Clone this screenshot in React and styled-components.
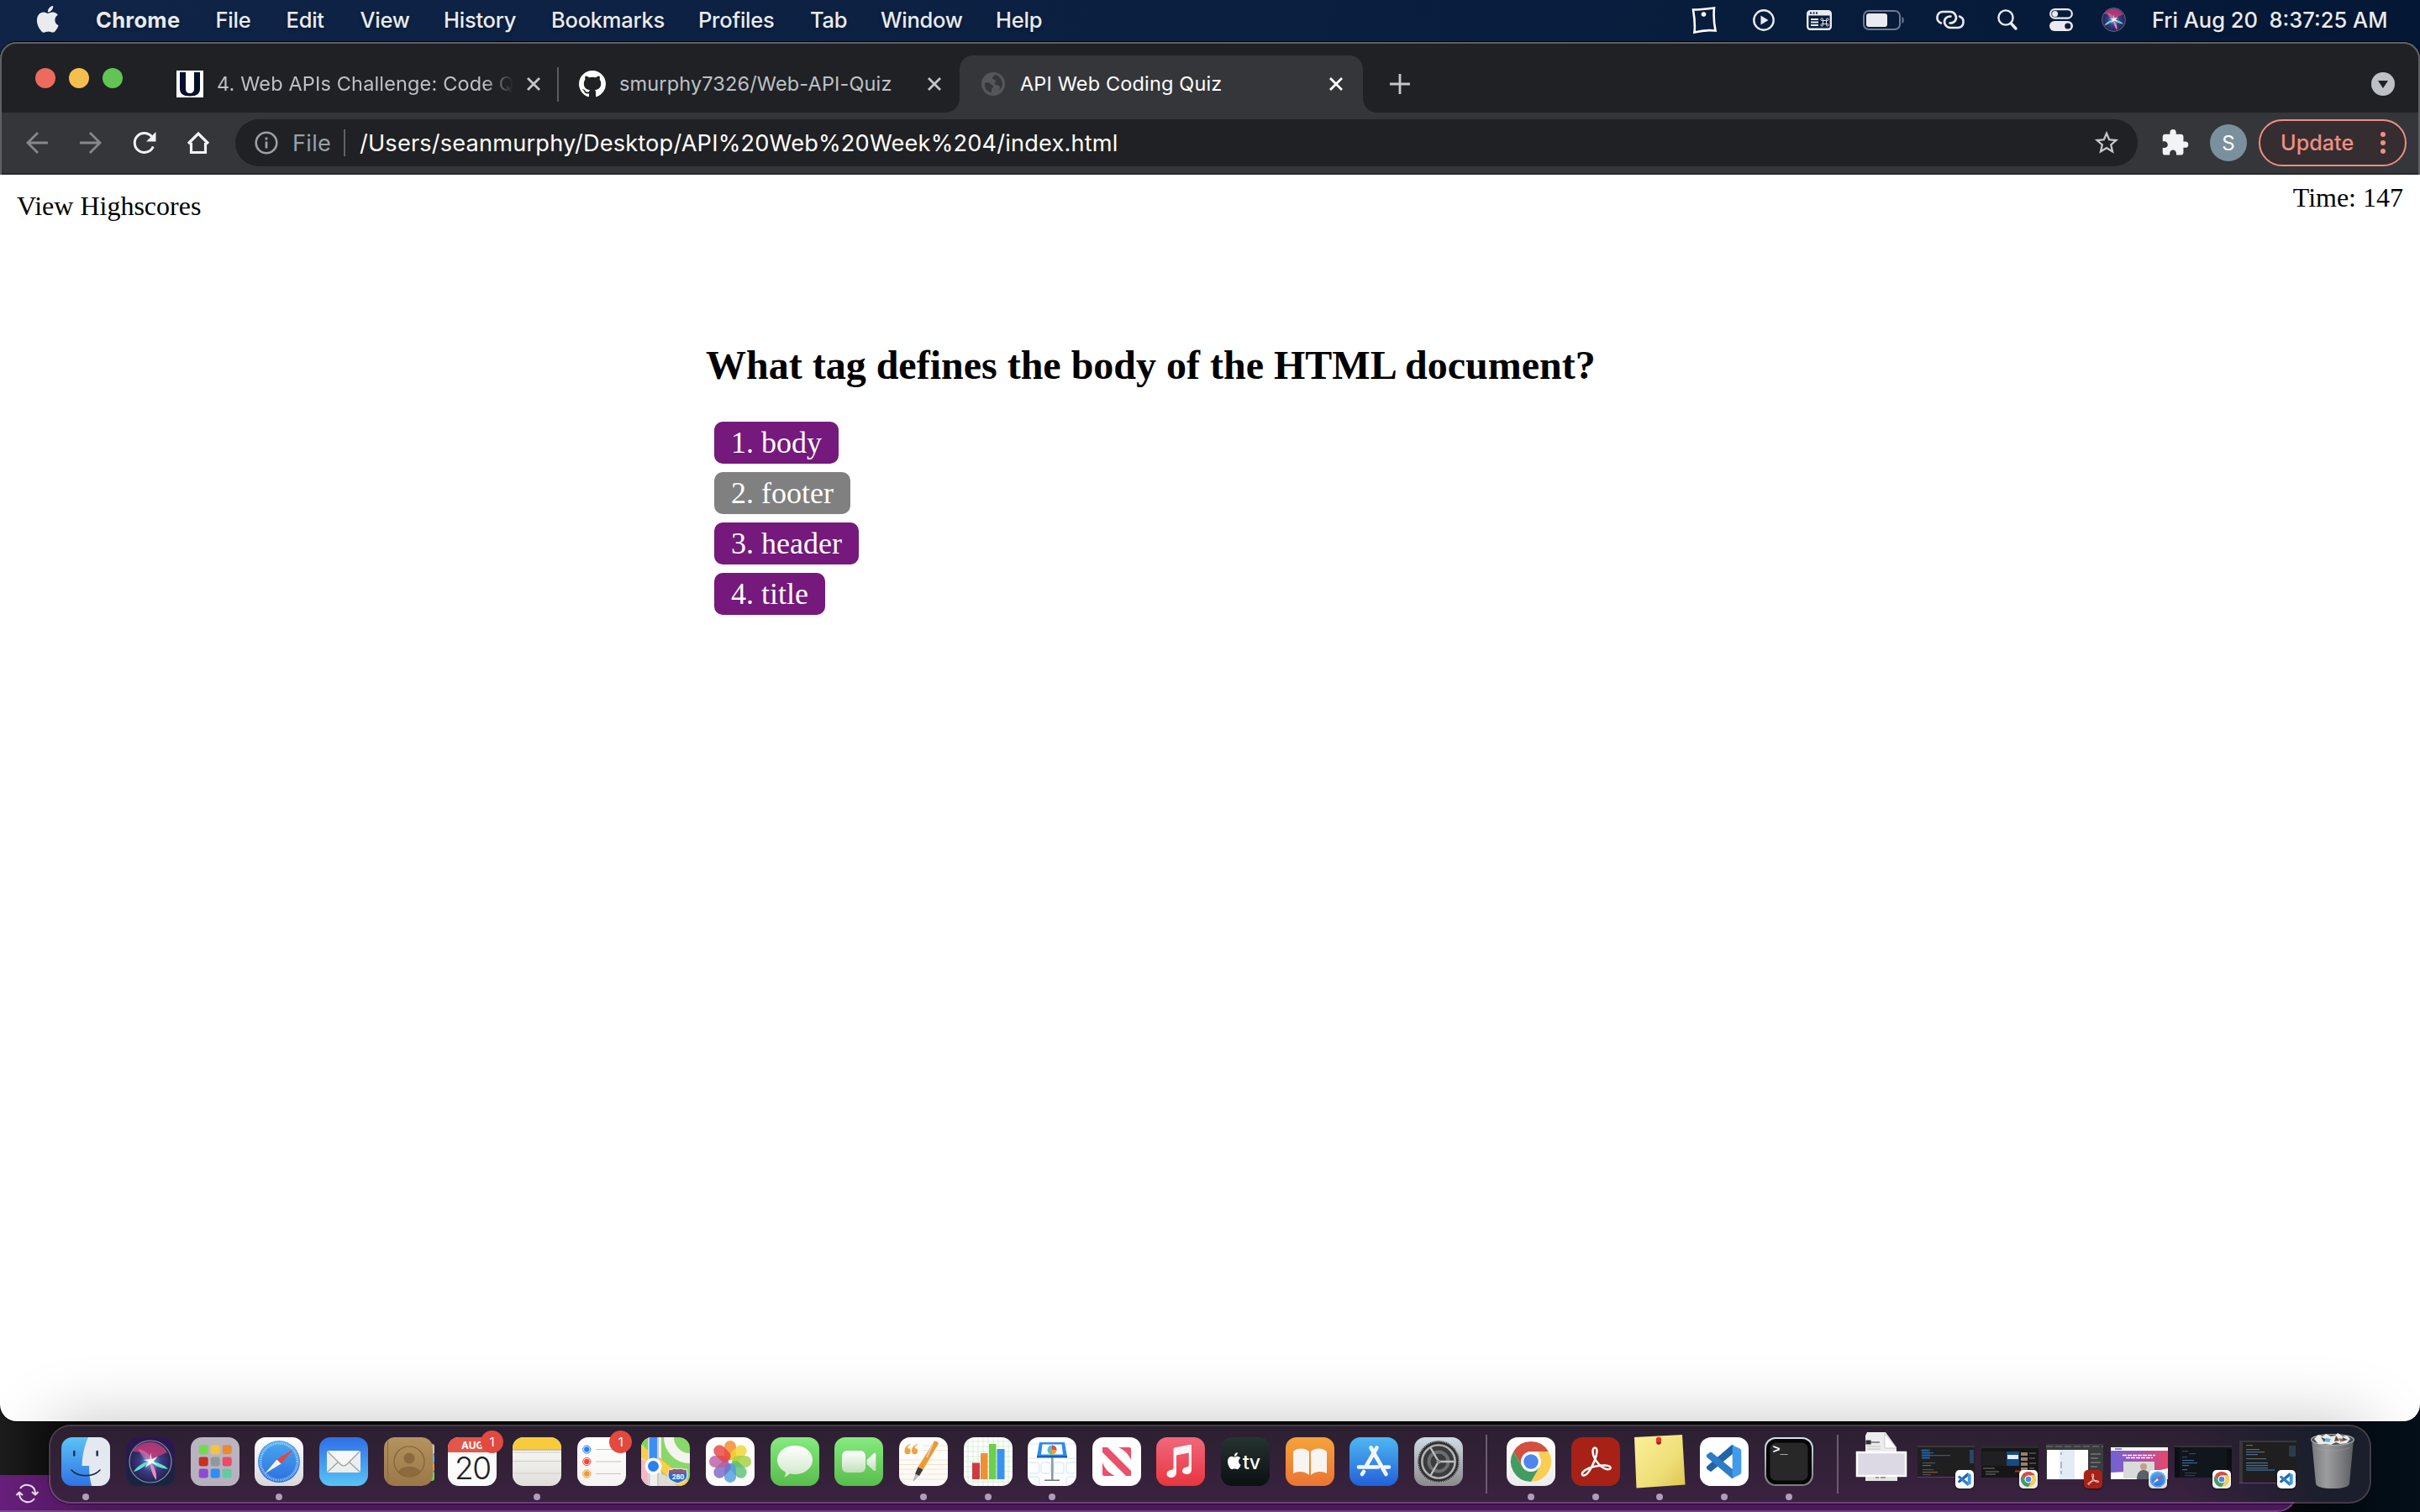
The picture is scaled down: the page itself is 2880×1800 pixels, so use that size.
import React from 'react';
import styled, { createGlobalStyle, css } from 'styled-components';

const GlobalStyle = createGlobalStyle`
  html, body { margin: 0; padding: 0; background: #000; }
  *, *::before, *::after { box-sizing: border-box; }
  svg { display: block; overflow: visible; flex: none; }
`;

const Desktop = styled.div`
  position: relative;
  isolation: isolate;
  width: 2880px;
  height: 1800px;
  overflow: hidden;
  display: flex;
  flex-direction: column;
  font-family: Inter, 'Liberation Sans', sans-serif;
  background: linear-gradient(90deg, #0f2446 0, #0b1f41 50%, #041836 100%);
`;

/* ---------- menu bar ---------- */

const MenuBar = styled.header`
  height: 50px;
  padding: 0 37px 3px 43px;
  display: flex;
  align-items: center;
  color: #e9ebef;
  font-size: 25.5px;
  font-weight: 500;
  text-shadow: 0 2px 4px rgba(0, 0, 0, 0.3);
`;

const AppleSlot = styled.div`
  width: 71px;
  height: 34px;
`;

const MenuItem = styled.span`
  width: ${(p) => p.$w}px;
  white-space: nowrap;
  font-weight: ${(p) => (p.$bold ? 700 : 500)};
  letter-spacing: ${(p) => (p.$bold ? 0.3 : -0.25)}px;
`;

const StatusIcons = styled.div`
  flex: 1;
  display: flex;
  justify-content: flex-end;
  align-items: center;
`;

const StatusSlot = styled.div`
  margin-left: ${(p) => p.$gap}px;
`;

const Clock = styled.span`
  width: 282px;
  margin-left: 31px;
  white-space: pre;
`;

/* ---------- browser window ---------- */

const Window = styled.main`
  height: 1642px;
  display: flex;
  flex-direction: column;
  border-radius: 20px;
  background: #fff;
  box-shadow: 0 0 0 1px #000;
`;

const Chrome = styled.div`
  position: relative;
  height: 158px;
  border-radius: 20px 20px 0 0;
  overflow: hidden;
  background: #202124;
  &::after {
    content: '';
    position: absolute;
    inset: 0 0 -20px 0;
    border: 2px solid #5f6063;
    border-radius: 20px;
    pointer-events: none;
  }
`;

const TabStrip = styled.div`
  height: 84px;
  padding-left: 42px;
  display: flex;
  align-items: flex-end;
`;

const Lights = styled.div`
  width: 144px;
  height: 84px;
  padding-top: 31px;
  display: flex;
  gap: 16px;
`;

const Light = styled.i`
  width: 24px;
  height: 24px;
  border-radius: 50%;
  background: ${(p) => p.$c};
`;

const Tab = styled.div`
  position: relative;
  width: ${(p) => p.$w}px;
  height: 68px;
  padding: 0 21px 0 24px;
  display: flex;
  align-items: center;
  color: #bdc1c6;
  font-size: 23.5px;
  ${(p) =>
    p.$active &&
    css`
      padding-right: 23px;
      color: #fff;
      background: #35363a;
      border-radius: 16px 16px 0 0;
      &::before,
      &::after {
        content: '';
        position: absolute;
        bottom: 0;
        width: 16px;
        height: 16px;
      }
      &::before {
        left: -16px;
        background: radial-gradient(circle at 0 0, transparent 15.5px, #35363a 16px);
      }
      &::after {
        right: -16px;
        background: radial-gradient(circle at 100% 0, transparent 15.5px, #35363a 16px);
      }
    `}
  ${(p) =>
    p.$divided &&
    css`
      background: linear-gradient(#5a5c60, #5a5c60) right 14px / 2px 41px no-repeat;
    `}
`;

const TabIcon = styled.span`
  width: 32px;
  height: 32px;
  margin-right: 16px;
  display: flex;
  align-items: center;
  justify-content: center;
`;

const UFavicon = styled.span`
  width: 32px;
  height: 32px;
  background: #fff;
`;

const TabTitle = styled.span`
  flex: 1;
  padding-bottom: 2px;
  overflow: hidden;
  white-space: nowrap;
  letter-spacing: 0.15px;
  ${(p) =>
    p.$fade &&
    css`
      margin-right: 15px;
      mask-image: linear-gradient(90deg, #000 90%, transparent 100%);
    `}
`;

const NewTab = styled.div`
  width: 88px;
  height: 68px;
  display: flex;
  align-items: center;
  justify-content: center;
`;

const TabSearch = styled.div`
  flex: 1;
  height: 68px;
  padding-right: 30px;
  display: flex;
  align-items: center;
  justify-content: flex-end;
`;

const Toolbar = styled.div`
  height: 74px;
  padding: 8px 16px 8px 28px;
  display: flex;
  align-items: center;
  background: #35363a;
  border-bottom: 2px solid #27282b;
`;

const NavButton = styled.div`
  width: 64px;
  height: 32px;
`;

const AddressBar = styled.div`
  width: 2264px;
  height: 56px;
  margin-left: -4px;
  padding: 0 20px;
  display: flex;
  align-items: center;
  border-radius: 28px;
  background: #202124;
  color: #fff;
  font-size: 27.2px;
`;

const Scheme = styled.span`
  width: 61px;
  margin-left: 14px;
  color: #9aa0a6;
  letter-spacing: 0.3px;
`;

const Rule = styled.i`
  width: 2px;
  height: 32px;
  margin-right: 17px;
  background: #5f6368;
`;

const Url = styled.span`
  flex: 1;
  white-space: nowrap;
  letter-spacing: 0.17px;
`;

const Avatar = styled.div`
  width: 44px;
  height: 44px;
  margin: 0 14px 0 26px;
  border-radius: 50%;
  background: #7b909d;
  color: #fff;
  font-size: 24px;
  display: flex;
  align-items: center;
  justify-content: center;
`;

const ExtensionSlot = styled.div`
  margin-left: 29px;
  width: 31px;
`;

const UpdateButton = styled.div`
  width: 176px;
  height: 56px;
  padding: 0 23px 0 24px;
  display: flex;
  align-items: center;
  justify-content: space-between;
  border: 2px solid #ee8f85;
  border-radius: 28px;
  background: #352d30;
  color: #ee8f85;
  font-size: 25.2px;
  font-weight: 500;
`;

/* ---------- page ---------- */

const Page = styled.section`
  flex: 1;
  font-family: 'Liberation Serif', 'Times New Roman', serif;
  color: #000;
  font-size: 32px;
`;

const PageTop = styled.div`
  height: 173px;
  display: flex;
  justify-content: space-between;
  align-items: flex-start;
`;

const Highscores = styled.a`
  margin: 19px 0 0 20px;
  line-height: 36px;
`;

const Timer = styled.span`
  margin: 9px 20px 0 0;
  line-height: 36px;
`;

const Quiz = styled.div`
  margin-left: 840px;
`;

const Question = styled.h2`
  margin: 0 0 41px;
  height: 80px;
  line-height: 107px;
  font-size: 48px;
  font-weight: 700;
`;

const Choices = styled.div`
  padding-left: 10px;
  display: flex;
  flex-direction: column;
  align-items: flex-start;
  gap: 10px;
`;

const Choice = styled.button`
  height: 50px;
  padding: 0 20px;
  border: 0;
  border-radius: 10px;
  background: ${(p) => (p.$hover ? '#808080' : '#75197c')};
  color: #fff;
  font: 36px/48px 'Liberation Serif', 'Times New Roman', serif;
`;

/* ---------- dock ---------- */

const Backdrop = styled.div`
  z-index: -1;
  height: 128px;
  margin-top: -20px;
  padding-top: 20px;
  display: flex;
  flex-direction: column;
  justify-content: flex-end;
  background: linear-gradient(90deg, #1d1d1d 0, #141414 40px, #0b0b0b 90px, #0a0a0a 2700px, #03090f 2760px, #05101b 100%);
`;

const EditorStatus = styled.div`
  width: 2733px;
  height: 44px;
  padding: 7px 0 0 19px;
  border-bottom: 2px solid #7b4a88;
  border-right: 2px solid #7b4a88;
  border-radius: 0 0 22px 0;
  background: linear-gradient(90deg, #68207c 0, #571a67 120px, #571a67 100%);
`;

const Stage = styled.div`
  position: relative;
  z-index: 0;
`;

const Dock = styled.nav`
  position: absolute;
  left: 58px;
  bottom: 10px;
  width: 2764px;
  height: 94px;
  padding: 0 4px;
  display: flex;
  border: 2px solid rgba(125, 110, 130, 0.5);
  border-radius: 26px;
  background: linear-gradient(90deg, transparent 92%, rgba(20, 30, 40, 0.8) 98%),
    linear-gradient(#2c2030, #3a2240);
  background-clip: padding-box;
  box-shadow: 0 0 0 1px rgba(0, 0, 0, 0.5), 0 0 80px rgba(0, 0, 0, 0.25);
`;

const Slot = styled.div`
  position: relative;
  width: 76.67px;
  height: 90px;
  padding-top: 13px;
  flex: none;
  display: flex;
  flex-direction: column;
  align-items: center;
`;

const RunningDot = styled.i`
  width: 8px;
  height: 8px;
  margin-top: 9px;
  border-radius: 50%;
  background: #b39bbd;
`;

const Divider = styled.i`
  width: 2px;
  height: 70px;
  flex: none;
  margin: 10px ${(p) => p.$right}px 0 ${(p) => p.$left}px;
  background: #6d5a73;
`;

const Badge = styled.span`
  position: absolute;
  top: 5px;
  left: 48px;
  width: 27px;
  height: 27px;
  border-radius: 50%;
  background: #e2493f;
  color: #fff;
  font-size: 15px;
  line-height: 27px;
  text-align: center;
`;

const Thumb = styled.div`
  position: relative;
  width: 68px;
  height: 58px;
  display: flex;
  align-items: center;
`;

const MiniIcon = styled.div`
  position: absolute;
  right: 1px;
  top: 39px;
  filter: drop-shadow(0 1px 1px rgba(0, 0, 0, 0.5));
`;

/* ---------- icons ---------- */

const Grad = ({ id, a, b }) => (
  <linearGradient id={id} x1="0" y1="0" x2="0" y2="1">
    <stop offset="0" stopColor={a} />
    <stop offset="1" stopColor={b} />
  </linearGradient>
);

const Tile = ({ id, a, b, size = 58, children }) => (
  <svg width={size} height={size} viewBox="0 0 58 58">
    <defs>
      <Grad id={`g-${id}`} a={a} b={b} />
      <clipPath id={`c-${id}`}>
        <rect width="58" height="58" rx="13" />
      </clipPath>
    </defs>
    <g clipPath={`url(#c-${id})`}>
      <rect width="58" height="58" fill={`url(#g-${id})`} />
      {children}
    </g>
  </svg>
);

const APPLE =
  'M17.05 20.28c-.98.95-2.05.8-3.08.35-1.09-.46-2.09-.48-3.24 0-1.44.62-2.2.44-3.06-.35C2.79 15.25 3.51 7.59 9.05 7.31c1.35.07 2.29.74 3.08.8 1.18-.24 2.31-.93 3.57-.84 1.51.12 2.65.72 3.4 1.8-3.12 1.87-2.38 5.98.48 7.13-.57 1.5-1.31 2.99-2.54 4.09zM12.03 7.25c-.15-2.23 1.66-4.07 3.74-4.25.29 2.58-2.34 4.5-3.74 4.25z';

const Finder = () => (
  <Tile id="finder" a="#5bc3f5" b="#2f72e4">
    <path d="M32 0C27 11 25 22 24.5 34H33c0 8 1 17 3 24h22V0z" fill="#e4e9f1" />
    <path d="M15.3 17v4.5M42.700 17v4.5" stroke="#173a5e" strokeWidth="2.600" strokeLinecap="round" />
    <path d="M12 39c8 9 26 9 34 0" fill="none" stroke="#16283c" strokeWidth="1.600" strokeLinecap="round" />
  </Tile>
);

const SiriOrb = () => (
  <>
    <circle cx="29" cy="29" r="25" fill="url(#siri-orb)" />
    <path d="M8 17C18 2 40 2 49 18c-8 4-14 5-20 10C24 20 18 17 8 17z" fill="#c33a78" opacity=".85" />
    <path d="M15 14c8 2 14 6 16 15-8-1-14-7-16-15z" fill="#e786c5" opacity=".5" />
    <path d="M29 28c9 2 17 5 21 10-8-1-16-3-21-10zM29 28C22 35 15 40 9 41c4-6 11-11 20-13z" fill="#5fe3d0" />
    <path d="M28 28c5 6 9 13 8 23-5-6-7-14-8-23z" fill="#f087c2" />
    <path d="M29 18l1.600 8 7-3-5 6 5 4-7-2-8 5 4-7-6-2 8-1z" fill="#fff" opacity=".9" />
    <circle cx="29" cy="29" r="25" fill="none" stroke="#8fb8c4" strokeWidth="1.200" opacity=".8" />
  </>
);

const SiriDefs = () => (
  <defs>
    <radialGradient id="siri-orb">
      <stop offset="0" stopColor="#6fb9d8" />
      <stop offset=".5" stopColor="#3a3c83" />
      <stop offset="1" stopColor="#27204f" />
    </radialGradient>
  </defs>
);

const Siri = () => (
  <Tile id="siri" a="#2e1650" b="#18263f">
    <SiriDefs />
    <SiriOrb />
  </Tile>
);

const PAD = ['#6fdc4e', '#f5c43c', '#e88a34', '#c92f22', '#8f9a9c', '#ec4b66', '#8d4bd4', '#2f8ef5', '#5fcca0'];
const Launchpad = () => (
  <Tile id="launch" a="#bab6c1" b="#b7b0bd">
    {PAD.map((c, i) => (
      <rect key={c} x={9.700 + (i % 3) * 14} y={9.200 + Math.floor(i / 3) * 14.200} width="11" height="11" rx="2.400" fill={c} />
    ))}
  </Tile>
);

const Safari = ({ size }) => (
  <Tile id="safari" a="#ffffff" b="#d9d9dc" size={size}>
    <defs>
      <Grad id="saf-b" a="#49a9f0" b="#2c6fdf" />
    </defs>
    <circle cx="29" cy="29" r="25" fill="url(#saf-b)" />
    <circle cx="29" cy="29" r="22" fill="none" stroke="#cfe6fb" strokeWidth="3" strokeDasharray=".7 1.220" />
    <path d="M46.500 14L31.500 31.500 26.500 26.500z" fill="#e8453a" />
    <path d="M12 43.500L26.500 26.500 31.500 31.500z" fill="#f4f4f4" />
  </Tile>
);

const Mail = () => (
  <Tile id="mail" a="#2f6ee8" b="#58c4f6">
    <rect x="9" y="16" width="40" height="26" rx="2" fill="#eceded" />
    <path d="M10 41l13-12M48 41L35 29" stroke="#9a9c9f" strokeWidth="1.100" />
    <path d="M10 17l15 15c2.500 2.500 5.500 2.500 8 0l15-15" fill="#f7f7f7" stroke="#9a9c9f" strokeWidth="1.100" />
  </Tile>
);

const Contacts = () => (
  <svg width="58" height="58" viewBox="0 0 58 58">
    <defs>
      <Grad id="cont" a="#b3935f" b="#9b7748" />
    </defs>
    <rect x="50" y="8" width="10" height="13" rx="3" fill="#c9c4bb" />
    <rect x="50" y="20" width="10" height="11" rx="2" fill="#58b7ea" />
    <rect x="50" y="30" width="10" height="11" rx="2" fill="#ee9337" />
    <rect x="50" y="40" width="10" height="12" rx="3" fill="#6cd557" />
    <rect width="58" height="58" rx="13" fill="url(#cont)" />
    <path d="M4.500 4v50" stroke="#8a6a3e" strokeWidth="1" />
    <circle cx="30" cy="29" r="18" fill="none" stroke="#826339" strokeWidth="1.200" />
    <circle cx="30" cy="25" r="6.500" fill="#8a6a3e" />
    <path d="M17 41c3-8 23-8 26 0-7 8-19 8-26 0z" fill="#8a6a3e" />
  </svg>
);

const CalTile = styled.div`
  width: 58px;
  height: 58px;
  border-radius: 13px;
  overflow: hidden;
  display: flex;
  flex-direction: column;
  align-items: center;
  background: #fbfbfb;
  color: #222;
  font-size: 37px;
  line-height: 37px;
  letter-spacing: -1.5px;
  font-weight: 300;
`;

const CalMonth = styled.span`
  width: 58px;
  height: 18px;
  background: #e2564b;
  color: #fff;
  font-size: 12px;
  font-weight: 700;
  line-height: 19px;
  letter-spacing: 0;
  text-align: center;
`;

const Calendar = () => (
  <CalTile>
    <CalMonth>AUG</CalMonth>
    20
  </CalTile>
);

const Notes = () => (
  <Tile id="notes" a="#fdfdfd" b="#e0ded8">
    <rect width="58" height="14.500" fill="#f8cb3d" />
    <path d="M0 15h58" stroke="#9a9484" strokeWidth="1" />
    <path d="M1 18h57" stroke="#b8b5ae" strokeWidth="1.400" strokeDasharray=".8 1.100" />
    <path d="M0 28.500h58M0 43h58" stroke="#cfcdca" strokeWidth="1" />
  </Tile>
);

const Reminders = () => (
  <Tile id="rem" a="#ffffff" b="#f6f4f2">
    {['#2b7df0', '#ea4a3e', '#ee9631'].map((c, i) => (
      <g key={c}>
        <circle cx="11.300" cy={14.500 + i * 14.500} r="4.600" fill="none" stroke={c} strokeWidth="1" />
        <circle cx="11.300" cy={14.500 + i * 14.500} r="3.200" fill={c} />
        <path d={`M22 ${14.500 + i * 14.500}h30`} stroke="#c4c4c6" strokeWidth="1" />
      </g>
    ))}
  </Tile>
);

const Shield = styled.text`
  font: 700 7.500px Inter, sans-serif;
  fill: #fff;
`;

const Maps = () => (
  <Tile id="maps" a="#8ad86a" b="#8ad86a">
    <path d="M0 0h24v58H0z" fill="#f0efec" />
    <path d="M0 25l8 6v27H0z" fill="#f3b7c6" />
    <path d="M0 8l8 8v14L0 24z" fill="#f8cf4a" />
    <path d="M0 0h8v16L0 8z" fill="#7ed45c" />
    <path d="M21 42l37 16H21z" fill="#dedcd5" />
    <path d="M21 24l37 29v10H50L21 38z" fill="#f8cf4a" stroke="#e0b02e" strokeWidth=".6" />
    <circle cx="58" cy="0" r="25" fill="none" stroke="#f5f4f0" strokeWidth="12" />
    <path d="M8.500 0h2v58h-2zM19 0h2v58h-2z" fill="#c9c8c5" />
    <path d="M10 0h9v34h-9z" fill="#3b8ff2" />
    <circle cx="14.500" cy="34.500" r="10" fill="#fff" />
    <circle cx="14.500" cy="34.500" r="6.500" fill="#2d7ff0" />
    <path d="M33 38c3 1 5 0 6-1 2 1 6 1 9 0 1 1 3 2 6 1 0 3 1 5 1 7 0 6-6 8-11.500 10C38 53 32 51 32 45c0-2 1-4 1-7z" fill="#2c6fcf" stroke="#fff" strokeWidth="1" />
    <path d="M33.500 39.500h20v2.500h-20z" fill="#dc4238" />
    <Shield x="36.700" y="49.500">280</Shield>
  </Tile>
);

const PETALS = ['#f08a28', '#f0d52f', '#a6cf3f', '#5cbf78', '#4f9de0', '#7a68c4', '#bb5f9f', '#e8463d'];
const Photos = () => (
  <Tile id="photos" a="#ffffff" b="#fafafa">
    {PETALS.map((c, i) => (
      <rect
        key={c}
        x="22"
        y="4"
        width="14"
        height="23"
        rx="7"
        fill={c}
        opacity=".82"
        transform={`rotate(${i * 45} 29 29)`}
      />
    ))}
  </Tile>
);

const Messages = () => (
  <Tile id="msg" a="#86ea80" b="#57bd4b">
    <defs>
      <Grad id="bub" a="#ffffff" b="#cfe6cb" />
    </defs>
    <path d="M29 10c12 0 21 7.500 21 17s-9 17-21 17c-2 0-4-.2-6-.7-2 2-4 3.500-7 4.200 1.500-1.800 2-3.800 1.800-6C12 38.500 8 33 8 27c0-9.500 9-17 21-17z" fill="url(#bub)" />
  </Tile>
);

const FaceTime = () => (
  <Tile id="ft" a="#86ea80" b="#57bd4b">
    <defs>
      <Grad id="cam" a="#ffffff" b="#c2dfbd" />
    </defs>
    <rect x="9" y="16" width="28" height="26" rx="6" fill="url(#cam)" />
    <path d="M38.500 27l8-7.500c1.500-1.300 2.800-.7 2.800 1v18c0 1.700-1.300 2.300-2.800 1l-8-7.500z" fill="url(#cam)" />
  </Tile>
);

const Pages = () => (
  <Tile id="pages" a="#ffffff" b="#fbfaf8">
    <path d="M28 10h30M28 15.500h30M0 27h58M0 32.500h58M0 38h58M0 44h58M0 50h58" stroke="#f6e2c4" strokeWidth="1" />
    <path d="M13 8c-4 1.500-6.500 4.500-6.500 8.500A3.600 3.600 0 1 0 10 13c0-1.800 1.200-3 3.400-4zM21.500 8c-4 1.500-6.500 4.500-6.500 8.500a3.600 3.600 0 1 0 3.500-3.500c0-1.800 1.200-3 3.400-4z" fill="#f0a23c" />
    <path d="M42 4.500c2-.5 4.500 1 5 3L28.500 38.500l-6-3z" fill="#ee9a2f" />
    <path d="M40 8l-7 16" stroke="#cfd2d6" strokeWidth="1.800" />
    <path d="M22.500 35.500l6 3-4.500 7.500-5-2.500z" fill="#3b3b3d" />
    <path d="M19.500 44.500l3.500 1.700L17 52z" fill="#bfc3c8" stroke="#777" strokeWidth=".4" />
  </Tile>
);

const Numbers = () => (
  <Tile id="nums" a="#ffffff" b="#fbfdfb">
    <path
      d="M5 0v58M11 0v58M17 0v58M23 0v58M29 0v58M35 0v58M41 0v58M47 0v58M53 0v58M0 5h58M0 11h58M0 17h58M0 23h58M0 29h58M0 35h58M0 41h58M0 47h58M0 53h58"
      stroke="#cdeccb"
      strokeWidth=".8"
    />
    <rect x="10" y="30.500" width="9" height="19.500" fill="#cf3a40" />
    <rect x="20" y="19" width="8.500" height="31" fill="#ee9133" />
    <rect x="30" y="8" width="8.500" height="42" fill="#6bd04a" />
    <rect x="39.500" y="14" width="9" height="36" fill="#3a93f2" />
  </Tile>
);

const Keynote = () => (
  <Tile id="key" a="#ffffff" b="#fafcff">
    <g fill="none" stroke="#cfe2f7" strokeWidth=".9">
      <rect x="-6" y="8" width="20" height="17" rx="3" />
      <rect x="44" y="8" width="20" height="17" rx="3" />
      <rect x="-6" y="30" width="20" height="13" rx="3" />
      <rect x="16" y="30" width="11" height="13" rx="3" />
      <rect x="31" y="30" width="12" height="13" rx="3" />
      <rect x="46" y="30" width="18" height="13" rx="3" />
      <rect x="-6" y="47" width="20" height="17" rx="3" />
      <rect x="46" y="47" width="18" height="17" rx="3" />
    </g>
    <path d="M28 23h2.600v28H28z" fill="#8e98a5" />
    <path d="M20 50.500h18v1.500H20z" fill="#6e7680" />
    <path d="M14 6h30l3 17H11z" fill="#2f8bea" />
    <path d="M11 22h36v2.500H11z" fill="#1b5fb8" />
    <path d="M17.500 8.500h23l1.500 12H16z" fill="#fff" />
    <circle cx="29" cy="15" r="5.500" fill="#56b9e8" />
    <path d="M29 15V9.500a5.500 5.500 0 0 1 5.500 5.500z" fill="#e24b4b" />
    <path d="M29 15h5.500a5.500 5.500 0 0 1-5.500 5.500z" fill="#f2a23a" />
    <path d="M29 15v5.500a5.500 5.500 0 0 1-5.300-4z" fill="#72c957" />
  </Tile>
);

const News = () => (
  <Tile id="news" a="#ffffff" b="#ffffff">
    <path d="M12 12h6l28 28v6h-6L12 18z" fill="#e9506b" />
    <path d="M31 12h13c1.300 0 2 .7 2 2v13C43 20 38 15 31 12zM12 30v14c0 1.300.7 2 2 2h13C20 43 15 38 12 30z" fill="#e9506b" />
  </Tile>
);

const Music = () => (
  <Tile id="music" a="#f0687c" b="#e8353f">
    <path
      d="M42 9.500v29.500c0 3-2.500 5-5.500 5S31 42.500 31 40.300c0-2.800 2.500-4.500 5-4.800 2-.3 2.800-.8 2.800-2.500V18.500L24 21.500V42c0 3.500-2.500 6-6 6-3.200 0-5.500-1.800-5.500-4.300 0-2.600 2.300-4.200 4.800-4.600 2.400-.4 3.200-1 3.200-3V15c0-1.600.6-2.400 2.200-2.700l17.300-3.500c1.300-.3 2 .1 2 .7z"
      fill="#fdf5f5"
    />
  </Tile>
);

const TvText = styled.text`
  font: 500 23px Inter, sans-serif;
  letter-spacing: -0.5px;
  fill: #fff;
`;

const AppleTv = () => (
  <Tile id="tv" a="#26332f" b="#0b1012">
    <path d={APPLE} transform="translate(3.500 14.500) scale(1.030 1.130)" fill="#fff" />
    <TvText x="26" y="37.500">tv</TvText>
  </Tile>
);

const Books = () => (
  <Tile id="books" a="#f4a33a" b="#ea7434">
    <path d="M28 17c-4-4.500-14-5-19 0v26c5-3 14-3 19 2zM30 17c4-4.500 14-5 19 0v26c-5-3-14-3-19 2z" fill="#f7f4f2" />
  </Tile>
);

const AppStore = () => (
  <Tile id="store" a="#4db8f2" b="#2260d8">
    <g stroke="#f4f8fd" strokeWidth="4.600" strokeLinecap="round">
      <path d="M11 35.500h23M42 35.500h5" />
      <path d="M32.500 12.500L20 34M17 41l-2 3" />
      <path d="M25.500 12.500L43.500 44" />
    </g>
  </Tile>
);

const Prefs = () => (
  <Tile id="prefs" a="#cfdce4" b="#8c8a8a">
    <circle cx="29" cy="29" r="23" fill="#77797a" stroke="#2b2c2d" strokeWidth="3.500" />
    <circle cx="29" cy="29" r="24.300" fill="none" stroke="#a9abac" strokeWidth="2" strokeDasharray="1 1.180" />
    <circle cx="29" cy="29" r="19.500" fill="#3b3c3d" stroke="#b5b7b8" strokeWidth="2.200" />
    <circle cx="29" cy="29" r="11.500" fill="none" stroke="#6c6e70" strokeWidth="4" />
    <path d="M29 29h19M29 29l-9.500-16.500M29 29l-9.500 16.500" stroke="#bcbec0" strokeWidth="2.400" />
    <circle cx="29" cy="29" r="2.500" fill="#8e9092" />
  </Tile>
);

const ChromeApp = ({ size }) => (
  <Tile id="chrome" a="#ffffff" b="#ececec" size={size}>
    <path d="M8.200 17A24 24 0 0 1 49.800 17H29a12 12 0 0 0-10.400 18z" fill="#d2503f" />
    <path d="M49.800 17A24 24 0 0 1 29 53l10.400-18A12 12 0 0 0 39 22.500L38 17z" fill="#f9ce53" />
    <path d="M8.200 17A24 24 0 0 0 29 53l10.400-18a12 12 0 0 1-20.800 0z" fill="#429c60" />
    <circle cx="29" cy="29" r="11" fill="#fff" />
    <circle cx="29" cy="29" r="8.800" fill="#4f86ec" />
  </Tile>
);

const Acrobat = ({ size }) => (
  <Tile id="acro" a="#a72116" b="#a72116" size={size}>
    <path
      d="M28 12.500c3.500 0 3 7 0 14.500-3.500 8.500-8.500 18-13 18.500-2.500.2-3-2.300-.8-4.500 5-4.800 17-8 26-7.500 5 .3 7 1.800 6.300 3.500-1 2.200-5.500 1.700-9.500-1.200-6-4.300-11.500-12-11.500-19 0-2.800 1-4.300 2.500-4.300z"
      fill="none"
      stroke="#fff"
      strokeWidth="2.500"
      strokeLinejoin="round"
    />
  </Tile>
);

const Stickies = () => (
  <svg width="58" height="58" viewBox="0 0 58 58">
    <defs>
      <linearGradient id="note" x1="0" y1="0" x2="1" y2="1">
        <stop offset="0" stopColor="#fbf09a" />
        <stop offset=".6" stopColor="#efdf78" />
        <stop offset="1" stopColor="#dcc550" />
      </linearGradient>
    </defs>
    <path d="M-1 0L56-3l3.500 59.500-58 4z" fill="url(#note)" />
    <circle cx="28" cy="6" r="2.800" fill="#8e1d14" />
    <circle cx="28" cy="3" r="3.200" fill="#e33427" />
  </svg>
);

const VSCode = ({ size }) => (
  <Tile id="vsc" a="#ffffff" b="#ffffff" size={size}>
    <path d="M8.500 38l3.500 2.500c.7.500 1.500.4 2 0L40 19V9.500c-.8-.8-1.700-.6-2.500 0L8.500 34.500c-.9.9-.9 2.500 0 3.500z" fill="#2163a6" />
    <path d="M8.500 20.500l3.500-2.500c.7-.5 1.500-.4 2 0L40 39v9.500c-.8.800-1.700.6-2.500 0L8.500 24c-.9-.9-.9-2.500 0-3.500z" fill="#2b7dc8" />
    <path d="M37.500 9.200l9.500 4.300c1.300.6 2 1.500 2 3v25c0 1.500-.7 2.400-2 3l-9.500 4.500c.8-.3 1.500-1 1.500-2V11c0-1-.6-1.600-1.500-1.800z" fill="#409bea" stroke="#409bea" strokeWidth=".6" />
  </Tile>
);

const TermText = styled.text`
  font: 700 15px 'Liberation Mono', monospace;
  fill: #fff;
`;

const Terminal = () => (
  <Tile id="term" a="#cfe6ee" b="#7b7b7b">
    <rect x="2" y="2" width="54" height="54" rx="11.500" fill="#050505" />
    <rect x="6.500" y="6.500" width="45" height="45" rx="7" fill="#282829" />
    <TermText x="9.500" y="19">&gt;_</TermText>
  </Tile>
);

const PrinterDoc = () => (
  <svg width="60" height="58" viewBox="0 0 60 58">
    <path d="M13-6h22l13 18v40H11V-2z" fill="#ececec" />
    <path d="M34-5l14 18H36c-1.500 0-2-.8-2-2z" fill="#fff" stroke="#bbb" strokeWidth=".8" />
    <path d="M12 4h5v4h-5zM17 6h11" stroke="#333" strokeWidth="1.200" fill="#333" />
    <path d="M13 11h16M13 14h16" stroke="#bbb" strokeWidth=".8" />
    <rect x="1" y="18" width="58" height="28" fill="#dcd8e4" stroke="#fff" strokeWidth="2.500" />
    <path d="M11 47h38v5H11z" fill="#e4e4e4" />
    <path d="M23 48h4M29 48h6" stroke="#555" strokeWidth="1" />
  </svg>
);

const CODE_A = [
  [4, 5, 9, '#2f6cae'], [5, 8, 14, '#2f6cae'], [5, 11, 34, '#2f6cae'], [5, 14, 9, '#2f6cae'],
  [6, 20, 15, '#55606a'], [6, 23, 10, '#4f8a8b'], [6, 28, 13, '#55606a'], [6, 31, 18, '#9a6b4f'], [6, 34, 10, '#55606a'],
];
const CODE_B = [
  [9, 6, 7, '#3b536e'], [17, 9, 8, '#3b536e'], [9, 13, 6, '#3b536e'], [9, 17, 14, '#4c7eb0'],
  [9, 20, 18, '#4c7eb0'], [9, 23, 8, '#4c7eb0'], [9, 28, 6, '#4c7eb0'], [12, 32, 14, '#36485c'], [12, 35, 12, '#36485c'],
];
const CODE_C = [
  [8, 5, 8, '#777'], [8, 10, 16, '#4a86c0'], [8, 13, 22, '#777'], [8, 16, 14, '#4a86c0'], [8, 21, 24, '#777'],
  [8, 26, 26, '#4a86c0'], [8, 29, 26, '#4a86c0'], [8, 32, 26, '#4a86c0'], [8, 34.500, 34, '#4a86c0'],
];

const CodeLines = ({ lines }) =>
  lines.map(([x, y, w, c]) => <rect key={`${x}-${y}`} x={x} y={y} width={w} height="1.200" fill={c} opacity=".8" />);

const EditorThumb = () => (
  <svg width="68" height="38" viewBox="0 0 68 38">
    <path d="M0 0h68v38H0z" fill="#1f1f20" />
    <path d="M0 0h68v2H0z" fill="#39393b" />
    <path d="M5 4h10v12H5z" fill="#1d4a7c" opacity=".7" />
    <CodeLines lines={CODE_A} />
    <path d="M62 5h5v16h-5z" fill="#2a4763" />
    <path d="M0 37h68v1H0z" fill="#7b2a90" />
  </svg>
);

const VideoThumb = () => (
  <svg width="68" height="38" viewBox="0 0 68 38">
    <path d="M0 0h68v38H0z" fill="#161617" />
    <path d="M0 0h68v3H0z" fill="#2b2b2d" />
    <path d="M1 7h29v17H1z" fill="#202022" />
    <path d="M30 7h15v17H30z" fill="#164a84" />
    <path d="M31 11h13v5H31z" fill="#e6eef6" />
    <path d="M47 8h8v4h-8zM47 14h8v4h-8zM47 20h8v4h-8zM47 26h8v4h-8z" fill="#9a7f68" />
    <path d="M57 9h8M57 15h7M57 21h8M57 27h6M2 27h14M5 31h16M5 34h12" stroke="#777" strokeWidth="1" />
    <path d="M40 29.500h6v2h-6z" fill="#c7281f" />
  </svg>
);

const PdfThumb = () => (
  <svg width="68" height="43" viewBox="0 0 68 43">
    <path d="M0 0h68v43H0z" fill="#3b3b3d" />
    <path d="M0 3h68" stroke="#77787b" strokeWidth="1" strokeDasharray="8 3" />
    <path d="M1 7h49v35H1z" fill="#fff" />
    <path d="M16 7h18v35H16z" fill="#e3ecf5" />
    <path d="M18 10v3M18 21v8M18 32v4" stroke="#7c8792" strokeWidth="1" />
    <path d="M53 12h12M53 17h9M53 22h12M53 27h8" stroke="#8a9b9c" strokeWidth="1" />
  </svg>
);

const SiteThumb = () => (
  <svg width="68" height="42" viewBox="0 0 68 42">
    <defs>
      <linearGradient id="site">
        <stop offset="0" stopColor="#6e63d6" />
        <stop offset=".5" stopColor="#a653ad" />
        <stop offset="1" stopColor="#e8476a" />
      </linearGradient>
    </defs>
    <path d="M0 0h68v42H0z" fill="#fff" />
    <path d="M0 0h68v4H0z" fill="#2b2b2d" />
    <path d="M5 6h8" stroke="#5c4fd0" strokeWidth="1.400" />
    <path d="M0 8h68v21L50 33H20L0 34z" fill="url(#site)" />
    <path d="M14 13.500h39M18 16.500h32" stroke="#fff" strokeWidth="1.600" strokeDasharray="5 1" />
    <path d="M15 21h37v20H15z" fill="#d9dbd9" />
    <circle cx="39" cy="27" r="4" fill="#c99e84" />
    <path d="M31 42c0-7 3-11 8-11s8 4 8 11z" fill="#5b6068" />
  </svg>
);

const DevtoolsThumb = () => (
  <svg width="68" height="38" viewBox="0 0 68 38">
    <path d="M0 0h68v38H0z" fill="#11151c" />
    <path d="M0 0h68v2H0z" fill="#333438" />
    <path d="M0 2h6v36H0zM62 4h6v34h-6z" fill="#0b0e14" />
    <CodeLines lines={CODE_B} />
  </svg>
);

const ReadmeThumb = () => (
  <svg width="68" height="51" viewBox="0 0 68 51">
    <path d="M0 0h68v51H0z" fill="#1f1f20" />
    <path d="M0 0h68v2H0zM0 2h4v48H0z" fill="#38383a" />
    <CodeLines lines={CODE_C} />
    <path d="M59 6h8v13h-8z" fill="#2d3c4b" />
    <path d="M0 50h68v1H0z" fill="#8a2aa0" />
  </svg>
);

const Trash = () => (
  <svg width="52" height="58" viewBox="0 0 52 58">
    <defs>
      <linearGradient id="can">
        <stop offset="0" stopColor="#77797b" />
        <stop offset=".35" stopColor="#9b9d9f" />
        <stop offset=".7" stopColor="#7b7d80" />
        <stop offset="1" stopColor="#5b5d60" />
      </linearGradient>
    </defs>
    <path d="M1 3l5 52c.5 4 8 6 20 6s19.500-2 20-6L51 3z" fill="url(#can)" />
    <ellipse cx="26" cy="3" rx="25.500" ry="6.500" fill="#4b4d50" stroke="#a9abad" strokeWidth="1.200" />
    <path d="M4 2l5-5 5 2 4-3 6 3 5-1 3-3 6 4 5-1 4 4-4 5-8 1-5-2-6 3-7-1-8 0z" fill="#ececec" />
    <path d="M12 0l6 2-2 4zM30-2l4 6-6 1zM38 0l6 3-7 2z" fill="#55504c" />
    <path d="M18 1l6 1-2 4-5-1z" fill="#5fb9d6" />
    <path d="M33 1l5 1-2 4z" fill="#b0643c" />
    <path d="M4 12c10 5 34 5 43 0" stroke="#a5a7a9" strokeWidth="1" fill="none" opacity=".4" />
  </svg>
);

/* ---------- data ---------- */

const MENUS = [
  { label: 'Chrome', w: 142.500, bold: true },
  { label: 'File', w: 84 },
  { label: 'Edit', w: 88 },
  { label: 'View', w: 99.500 },
  { label: 'History', w: 128 },
  { label: 'Bookmarks', w: 175 },
  { label: 'Profiles', w: 133 },
  { label: 'Tab', w: 84 },
  { label: 'Window', w: 137 },
  { label: 'Help', w: 60 },
];

const APPS = [
  { name: 'finder', Icon: Finder, running: true },
  { name: 'siri', Icon: Siri },
  { name: 'launchpad', Icon: Launchpad },
  { name: 'safari', Icon: Safari, running: true },
  { name: 'mail', Icon: Mail },
  { name: 'contacts', Icon: Contacts },
  { name: 'calendar', Icon: Calendar, badge: 1 },
  { name: 'notes', Icon: Notes, running: true },
  { name: 'reminders', Icon: Reminders, badge: 1 },
  { name: 'maps', Icon: Maps },
  { name: 'photos', Icon: Photos },
  { name: 'messages', Icon: Messages },
  { name: 'facetime', Icon: FaceTime },
  { name: 'pages', Icon: Pages, running: true },
  { name: 'numbers', Icon: Numbers, running: true },
  { name: 'keynote', Icon: Keynote, running: true },
  { name: 'news', Icon: News },
  { name: 'music', Icon: Music },
  { name: 'tv', Icon: AppleTv },
  { name: 'books', Icon: Books },
  { name: 'appstore', Icon: AppStore },
  { name: 'preferences', Icon: Prefs },
];

const MORE_APPS = [
  { name: 'chrome', Icon: ChromeApp, running: true },
  { name: 'acrobat', Icon: Acrobat, running: true },
  { name: 'stickies', Icon: Stickies, running: true },
  { name: 'vscode', Icon: VSCode, running: true },
  { name: 'terminal', Icon: Terminal, running: true },
];

const MINIMIZED = [
  { name: 'editor', Picture: EditorThumb, Icon: VSCode },
  { name: 'video', Picture: VideoThumb, Icon: ChromeApp },
  { name: 'pdf', Picture: PdfThumb, Icon: Acrobat },
  { name: 'site', Picture: SiteThumb, Icon: Safari },
  { name: 'devtools', Picture: DevtoolsThumb, Icon: ChromeApp },
  { name: 'readme', Picture: ReadmeThumb, Icon: VSCode },
];

const CHOICES = ['1. body', '2. footer', '3. header', '4. title'];

const DockApp = ({ Icon, running, badge }) => (
  <Slot>
    <Icon />
    {running && <RunningDot />}
    {badge && <Badge>{badge}</Badge>}
  </Slot>
);

const CloseIcon = ({ color }) => (
  <svg width="18" height="18" viewBox="0 0 18 18">
    <path d="M2 2l14 14M16 2L2 16" stroke={color} strokeWidth="2.800" />
  </svg>
);

const StatusGlyphs = () => (
  <StatusIcons>
    <StatusSlot $gap={0}>
      <svg width="30" height="32" viewBox="0 0 30 32" fill="none" stroke="#fff" strokeWidth="2.600">
        <path d="M2 3.500c8 0 17-1 25-2-1 9 0 19 1.500 27-8-1-17 0-25 2 1-9 0-18-1.500-27z" />
        <circle cx="14.500" cy="9" r="2.800" fill="#fff" stroke="none" />
      </svg>
    </StatusSlot>
    <StatusSlot $gap={43}>
      <svg width="26" height="26" viewBox="0 0 26 26">
        <circle cx="13" cy="13" r="11.700" fill="none" stroke="#e9ebef" strokeWidth="2.400" />
        <path d="M9.500 7.500v11l9-5.500z" fill="#e9ebef" />
      </svg>
    </StatusSlot>
    <StatusSlot $gap={38}>
      <svg width="30" height="24" viewBox="0 0 30 24">
        <rect x="1.200" y="1.200" width="27.600" height="21.600" rx="3" fill="none" stroke="#e9ebef" strokeWidth="2.400" />
        <path d="M1 2h28v4.500H1z" fill="#e9ebef" />
        <path d="M4 3.500h2M7.500 3.500h2M11 3.500h2" stroke="#0a1e40" strokeWidth="2" />
        <path d="M5 11h9M5 14.500h9M5 18h9" stroke="#e9ebef" strokeWidth="1.800" />
        <path d="M19.500 12.500h4v4h-4zM19.500 12.500h-1.300a1.300 1.300 0 1 1 1.300-1.300zM23.500 12.500v-1.300a1.300 1.300 0 1 1 1.300 1.300zM23.500 16.500h1.300a1.300 1.300 0 1 1-1.300 1.300zM19.500 16.500v1.300a1.300 1.300 0 1 1-1.300-1.300z" fill="none" stroke="#e9ebef" strokeWidth="1" />
      </svg>
    </StatusSlot>
    <StatusSlot $gap={37}>
      <svg width="50" height="24" viewBox="0 0 50 24">
        <rect x="1" y="1" width="43" height="22" rx="6" fill="none" stroke="#6d7a91" strokeWidth="2" />
        <rect x="4" y="4" width="25" height="16" rx="3" fill="#e9ebef" />
        <path d="M46.500 8v8c3-1 3-7 0-8z" fill="#6d7a91" />
      </svg>
    </StatusSlot>
    <StatusSlot $gap={36}>
      <svg width="36" height="24" viewBox="0 0 36 24" fill="none" stroke="#e9ebef" strokeWidth="2.600" strokeLinecap="round">
        <path d="M7 15.500A7 7 0 0 1 8.500 2H18a7 7 0 0 1 6 10.500c-1.500 2.500-4 3-6.500 3" />
        <path d="M29 7.500A7 7 0 0 1 27.500 21H18A7 7 0 0 1 12 10.500c1.500-2.500 4-3 6.500-3" />
      </svg>
    </StatusSlot>
    <StatusSlot $gap={38}>
      <svg width="24" height="25" viewBox="0 0 24 25" fill="none" stroke="#e9ebef" strokeLinecap="round">
        <circle cx="10" cy="10" r="8.600" strokeWidth="2.400" />
        <path d="M16.500 17l5.500 6" strokeWidth="3.400" />
      </svg>
    </StatusSlot>
    <StatusSlot $gap={38}>
      <svg width="28" height="27" viewBox="0 0 28 27">
        <rect x="1.200" y="1.200" width="25.600" height="10.400" rx="5.200" fill="none" stroke="#e9ebef" strokeWidth="2.200" />
        <circle cx="6.600" cy="6.400" r="3.500" fill="#e9ebef" />
        <rect x="0" y="15" width="28" height="12" rx="6" fill="#e9ebef" />
        <circle cx="21.800" cy="21" r="3.600" fill="#0a1e40" />
      </svg>
    </StatusSlot>
    <StatusSlot $gap={34}>
      <svg width="29" height="29" viewBox="3 3 52 52">
        <SiriDefs />
        <SiriOrb />
      </svg>
    </StatusSlot>
  </StatusIcons>
);

export default function App() {
  return (
    <Desktop>
      <GlobalStyle />
      <MenuBar>
        <AppleSlot>
          <svg width="27" height="32" viewBox="3.800 3 16 18.200" preserveAspectRatio="none">
            <path d={APPLE} fill="#e9ebef" />
          </svg>
        </AppleSlot>
        {MENUS.map((m) => (
          <MenuItem key={m.label} $w={m.w} $bold={m.bold}>
            {m.label}
          </MenuItem>
        ))}
        <StatusGlyphs />
        <Clock>{'Fri Aug 20  8:37:25 AM'}</Clock>
      </MenuBar>

      <Window>
        <Chrome>
          <TabStrip>
            <Lights>
              <Light $c="#ed6a5e" />
              <Light $c="#f5bf4f" />
              <Light $c="#61c554" />
            </Lights>
            <Tab $w={479} $divided>
              <TabIcon>
                <UFavicon>
                  <svg width="32" height="32" viewBox="0 0 32 32">
                    <path d="M4 2h7v20c0 3 2 5 5 5s5-2 5-5V2h7v20c0 5-4 8.500-12 8.500S4 27 4 22z" fill="#050f2c" />
                  </svg>
                </UFavicon>
              </TabIcon>
              <TabTitle $fade>4. Web APIs Challenge: Code Quiz</TabTitle>
              <CloseIcon color="#c4c7ca" />
            </Tab>
            <Tab $w={477}>
              <TabIcon>
                <svg width="32" height="32" viewBox="0 0 16 16">
                  <path
                    fill="#fff"
                    d="M8 0C3.580 0 0 3.580 0 8c0 3.540 2.290 6.530 5.470 7.590.4.070.55-.17.55-.38 0-.19-.010-.82-.010-1.490-2.010.37-2.530-.49-2.690-.94-.090-.23-.48-.94-.82-1.130-.28-.15-.68-.52-.010-.53.63-.010 1.080.58 1.230.82.72 1.210 1.870.87 2.330.66.070-.52.28-.87.51-1.070-1.780-.2-3.640-.89-3.640-3.950 0-.87.31-1.590.82-2.150-.080-.2-.36-1.020.080-2.120 0 0 .67-.21 2.200.82.64-.18 1.320-.27 2-.27s1.360.090 2 .27c1.530-1.040 2.200-.82 2.200-.82.44 1.100.16 1.920.080 2.120.51.56.82 1.270.82 2.150 0 3.070-1.870 3.750-3.650 3.950.29.25.54.73.54 1.480 0 1.070-.010 1.930-.010 2.200 0 .21.15.46.55.38A8.010 8.010 0 0 0 16 8c0-4.420-3.580-8-8-8z"
                  />
                </svg>
              </TabIcon>
              <TabTitle>smurphy7326/Web-API-Quiz</TabTitle>
              <CloseIcon color="#c4c7ca" />
            </Tab>
            <Tab $w={480} $active>
              <TabIcon>
                <svg width="28" height="28" viewBox="0 0 28 28">
                  <circle cx="14" cy="14" r="14" fill="#55565a" />
                  <path d="M4 13c2-1 5-1 7 1 1 1 3 1 3 3 0 1.500-2 1.500-2 3v4C7 23.500 3 19 4 13zM17 3c-2 1-4 2-4 4s3 1 4 3-2 2-1 4 5 1 6 3c.5 1.500-.5 3-1.500 4.500C25 19 26 14 24 10c-1-3-4-6-7-7z" fill="#35363a" />
                </svg>
              </TabIcon>
              <TabTitle>API Web Coding Quiz</TabTitle>
              <CloseIcon color="#fff" />
            </Tab>
            <NewTab>
              <svg width="24" height="24" viewBox="0 0 24 24">
                <path d="M12 0v24M0 12h24" stroke="#c4c7ca" strokeWidth="2.800" />
              </svg>
            </NewTab>
            <TabSearch>
              <svg width="28" height="28" viewBox="0 0 28 28">
                <circle cx="14" cy="14" r="14" fill="#bdc1c6" />
                <path d="M8 10h12l-6 9z" fill="#202124" />
              </svg>
            </TabSearch>
          </TabStrip>

          <Toolbar>
            <NavButton>
              <svg width="32" height="32" viewBox="0 0 32 32" fill="none" stroke="#87888b" strokeWidth="2.800">
                <path d="M29 16H5M17 4L5 16l12 12" />
              </svg>
            </NavButton>
            <NavButton>
              <svg width="32" height="32" viewBox="0 0 32 32" fill="none" stroke="#87888b" strokeWidth="2.800">
                <path d="M3 16h24M15 4l12 12-12 12" />
              </svg>
            </NavButton>
            <NavButton>
              <svg width="32" height="32" viewBox="0 0 32 32">
                <path d="M26.300 20.500A11.500 11.500 0 1 1 24.500 8.500" fill="none" stroke="#f1f3f4" strokeWidth="3" />
                <path d="M29.500 3v11.500H18z" fill="#f1f3f4" />
              </svg>
            </NavButton>
            <NavButton>
              <svg width="32" height="32" viewBox="0 0 32 32">
                <path d="M4 17L16 5l12 12M7.500 16v11.500h17V16" fill="none" stroke="#f1f3f4" strokeWidth="3.200" />
              </svg>
            </NavButton>
            <AddressBar>
              <svg width="34" height="34" viewBox="0 0 34 34">
                <circle cx="17" cy="17" r="12.300" fill="none" stroke="#9aa0a6" strokeWidth="2.600" />
                <path d="M17 15.500v8M17 10.500v3" stroke="#9aa0a6" strokeWidth="2.800" />
              </svg>
              <Scheme>File</Scheme>
              <Rule />
              <Url>/Users/seanmurphy/Desktop/API%20Web%20Week%204/index.html</Url>
              <svg width="34" height="34" viewBox="0 0 24 24">
                <path
                  fill="#c4c7ca"
                  d="M22 9.240l-7.190-.62L12 2 9.190 8.630 2 9.240l5.460 4.730L5.820 21 12 17.270 18.180 21l-1.630-7.030L22 9.240zM12 15.400l-3.760 2.270 1-4.280-3.320-2.880 4.380-.38L12 6.100l1.710 4.040 4.380.38-3.320 2.880 1 4.280L12 15.400z"
                />
              </svg>
            </AddressBar>
            <ExtensionSlot>
              <svg width="32" height="32" viewBox="1.500 1 22 22">
                <path
                  fill="#f1f3f4"
                  d="M20.500 11H19V7c0-1.100-.9-2-2-2h-4V3.500a2.500 2.500 0 0 0-5 0V5H4c-1.100 0-1.990.9-1.990 2v3.800H3.500c1.490 0 2.700 1.210 2.700 2.700s-1.210 2.700-2.700 2.700H2V20c0 1.100.9 2 2 2h3.800v-1.500c0-1.490 1.210-2.700 2.700-2.700s2.700 1.210 2.700 2.700V22H17c1.100 0 2-.9 2-2v-4h1.500a2.500 2.500 0 0 0 0-5z"
                />
              </svg>
            </ExtensionSlot>
            <Avatar>S</Avatar>
            <UpdateButton>
              Update
              <svg width="6" height="28" viewBox="0 0 6 28" fill="#ee8f85">
                <circle cx="3" cy="4" r="3" />
                <circle cx="3" cy="14" r="3" />
                <circle cx="3" cy="24" r="3" />
              </svg>
            </UpdateButton>
          </Toolbar>
        </Chrome>

        <Page>
          <PageTop>
            <Highscores>View Highscores</Highscores>
            <Timer>Time: 147</Timer>
          </PageTop>
          <Quiz>
            <Question>What tag defines the body of the HTML document?</Question>
            <Choices>
              {CHOICES.map((c, i) => (
                <Choice key={c} $hover={i === 1}>
                  {c}
                </Choice>
              ))}
            </Choices>
          </Quiz>
        </Page>
      </Window>

      <Backdrop>
        <EditorStatus>
          <svg width="27" height="30" viewBox="0 0 27 30" fill="none" stroke="#f1e8f4" strokeWidth="2" strokeLinejoin="round">
            <path d="M5 9a10 10 0 0 1 18 5v2M19 13l4 3.500 3.500-3.500" />
            <path d="M22 21a10 10 0 0 1-18-5v-2M0.500 17L4 13.500 8 17" />
          </svg>
        </EditorStatus>
      </Backdrop>

      <Stage>
        <Dock>
          {APPS.map((a) => (
            <DockApp key={a.name} {...a} />
          ))}
          <Divider $left={18} $right={13.400} />
          {MORE_APPS.map((a) => (
            <DockApp key={a.name} {...a} />
          ))}
          <Divider $left={18.500} $right={13} />
          <Slot>
            <PrinterDoc />
          </Slot>
          {MINIMIZED.map(({ name, Picture, Icon }) => (
            <Slot key={name}>
              <Thumb>
                <Picture />
                <MiniIcon>
                  <Icon size={22} />
                </MiniIcon>
              </Thumb>
            </Slot>
          ))}
          <Slot>
            <Trash />
          </Slot>
        </Dock>
      </Stage>
    </Desktop>
  );
}
